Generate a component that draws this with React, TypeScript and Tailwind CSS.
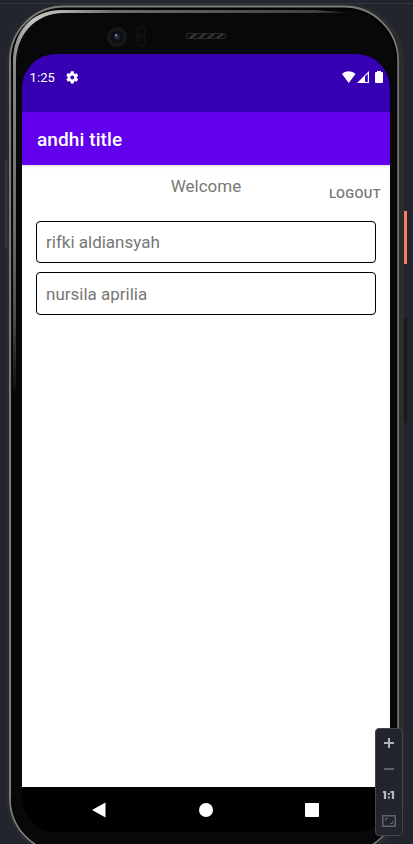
import React from "react";

function PhoneBody() {
  return (
    <svg className="absolute inset-0" width="413" height="844" viewBox="0 0 413 844" fill="none">
      <defs>
        <linearGradient id="sheen" x1="13" y1="0" x2="345" y2="0" gradientUnits="userSpaceOnUse">
          <stop offset="0" stopColor="#8b8b88" />
          <stop offset="0.06" stopColor="#c4c4c0" />
          <stop offset="0.14" stopColor="#b5b5b2" />
          <stop offset="0.3" stopColor="#6d6d6d" />
          <stop offset="1" stopColor="#3a3a3a" />
        </linearGradient>
        <linearGradient id="side" x1="0" y1="60" x2="0" y2="400" gradientUnits="userSpaceOnUse">
          <stop offset="0" stopColor="#888885" />
          <stop offset="0.5" stopColor="#6b6b69" />
          <stop offset="0.75" stopColor="#4c4c4b" />
          <stop offset="1" stopColor="#08080a" />
        </linearGradient>
        <radialGradient id="lens">
          <stop offset="0" stopColor="#424c63" />
          <stop offset="0.25" stopColor="#181c2a" />
          <stop offset="0.5" stopColor="#08090d" />
          <stop offset="0.65" stopColor="#151515" />
          <stop offset="1" stopColor="#1a1a1a" />
        </radialGradient>
      </defs>
      <path d="M0 3.5H413" stroke="#34373e" />
      <rect x="5" y="160" width="3" height="88" rx="1" fill="#373737" />
      <rect x="404" y="211" width="3" height="53" fill="#f4805f" />
      <rect x="404" y="318" width="3" height="105" rx="1" fill="#171918" />
      <rect x="7" y="4.5" width="397" height="851" rx="56" fill="#2b2c2c" />
      <rect x="10" y="6.5" width="388" height="846" rx="54" fill="#050505" stroke="#7c7c7e" strokeWidth="1.8" />
      <path d="M10.200 60V798" stroke="#77797a" strokeWidth="2.400" />
      <rect x="12" y="9" width="384.5" height="842" rx="52" fill="#08080a" stroke="#030303" strokeWidth="1.4" />
      <path d="M13 60V390H16V60Z" fill="url(#side)" />
      <path d="M13 62C13 32 31 10 62 10H315L345 12.4L315 13H64C34 13 16.5 36 16 62Z" fill="url(#sheen)" />
      <circle cx="117" cy="37" r="10" fill="url(#lens)" />
      <circle cx="116" cy="35" r="1" fill="#a0a0a8" />
      <rect x="137" y="27" width="8" height="19" rx="4" fill="#0e0e0e" stroke="#141414" />
      <circle cx="141" cy="31" r="3" fill="#090909" />
      <circle cx="141" cy="42" r="3" fill="#090909" />
      <rect x="186" y="33.5" width="40" height="5" rx="2.5" fill="#0c0c0c" stroke="#2c2c2c" />
      <path d="M190 38L196 34M199 38L205 34M208 38L214 34M217 38L223 34" stroke="#3a3a3a" strokeWidth="2" />
    </svg>
  );
}

function StatusBar() {
  return (
    <div className="flex h-[58px] items-start bg-[#3700b3] pl-[7.5px] pr-[6px] pt-[16px] text-white">
      <span className="w-[36.5px] text-[13px] leading-[16px] tracking-[0.1px]">1:25</span>
      <svg className="mt-[0.5px]" width="12.500" height="13" viewBox="2 2 20 20" fill="white">
        <path d="M19.14 12.94c.04-.3.06-.61.06-.94s-.02-.64-.07-.94l2.03-1.58a.49.49 0 0 0 .12-.61l-1.92-3.32a.49.49 0 0 0-.59-.22l-2.39.96a7.03 7.03 0 0 0-1.62-.94l-.36-2.54A.48.48 0 0 0 13.92 2h-3.84a.48.48 0 0 0-.47.41l-.36 2.54c-.59.24-1.13.57-1.62.94l-2.39-.96a.48.48 0 0 0-.59.22L2.74 8.87a.47.47 0 0 0 .12.61l2.03 1.58c-.05.3-.09.63-.09.94s.02.64.07.94l-2.03 1.58a.49.49 0 0 0-.12.61l1.92 3.32c.12.22.37.29.59.22l2.39-.96c.5.38 1.03.7 1.62.94l.36 2.54c.05.24.24.41.48.41h3.84c.24 0 .44-.17.47-.41l.36-2.54a6.8 6.8 0 0 0 1.62-.94l2.39.96c.22.08.47 0 .59-.22l1.92-3.32a.47.47 0 0 0-.12-.61zM12 15.2A3.2 3.2 0 1 1 12 8.8a3.2 3.2 0 0 1 0 6.4z" />
      </svg>
      <svg className="ml-auto" width="43" height="14" viewBox="0 0 43 14" fill="white">
        <path d="M1 4C4.500 .2 10.500 .2 14.500 4L7.750 13Z" />
        <path fillRule="evenodd" d="M16 13L28 1V13ZM24 6.500V12H26.800V3.800Z" />
        <path d="M36 1H40V2H41Q42 2 42 3V12Q42 13 41 13H35Q34 13 34 12V3Q34 2 35 2H36Z" />
      </svg>
    </div>
  );
}

function NameRow({ name }: { name: string }) {
  return (
    <div className="flex h-[42.5px] items-center rounded-[4px] border border-black px-[9px] pt-[2px] text-[17px] text-[#777]">
      {name}
    </div>
  );
}

function ZoomPanel() {
  return (
    <div className="absolute left-[375px] top-[728px] flex h-[108px] w-[28px] flex-col items-center rounded-[4px] border border-[#434549] bg-[#22252d]">
      <svg width="26" height="106" viewBox="0 0 26 106" fill="none">
        <path d="M8 14H18M13 9V19" stroke="#b1b3b5" strokeWidth="2" />
        <path d="M8 40H18" stroke="#606264" strokeWidth="2" />
        <path d="M7 63H9V70M14.500 63H17V70" stroke="#b5b7b9" strokeWidth="2.200" />
        <path d="M11.800 64H13.800V66H11.800ZM11.800 67.500H13.800V69.500H11.800Z" fill="#b5b7b9" />
        <rect x="6.750" y="86.750" width="12.500" height="10.500" stroke="#606264" strokeWidth="1.500" />
        <path d="M9.500 92V89.500H12M16.500 92V94.500H14" stroke="#606264" />
      </svg>
    </div>
  );
}

export default function App() {
  return (
    <div className="relative h-[844px] w-[413px] overflow-hidden bg-[#22252d] pl-[22px] pt-[54px] font-[Roboto,sans-serif]">
      <PhoneBody />
      <main className="relative flex h-[778px] w-[368px] flex-col overflow-hidden rounded-[34px]">
        <StatusBar />
        <header className="z-10 flex h-[53px] shrink-0 items-center bg-[#6200ee] px-[15px] pt-[3px] text-[19px] font-medium tracking-[0.1px] text-white shadow-[0_1px_3px_rgba(0,0,0,0.15)]">
          andhi title
        </header>
        <section className="flex-1 bg-white px-[14px]">
          <div className="grid h-[55.5px] grid-cols-[1fr_auto_1fr] text-[#777]">
            <span className="col-start-2 pt-[9px] text-[17px] leading-[25px]">Welcome</span>
            <button className="mr-[-5px] self-start justify-self-end pt-[20px] text-[13px] font-medium leading-[18px] tracking-[0.35px]">LOGOUT</button>
          </div>
          <div className="flex flex-col gap-[9px]">
            <NameRow name="rifki aldiansyah" />
            <NameRow name="nursila aprilia" />
          </div>
        </section>
        <nav className="flex h-[45px] shrink-0 items-center justify-between bg-black pl-[69px] pr-[71px]">
          <svg width="16" height="16" viewBox="0 0 16 16" fill="white"><path d="M1 8L14.500 .5V15.500Z" /></svg>
          <div className="h-[14px] w-[14px] rounded-full bg-white" />
          <div className="h-[14px] w-[14px] rounded-[1px] bg-white" />
        </nav>
      </main>
      <ZoomPanel />
    </div>
  );
}
